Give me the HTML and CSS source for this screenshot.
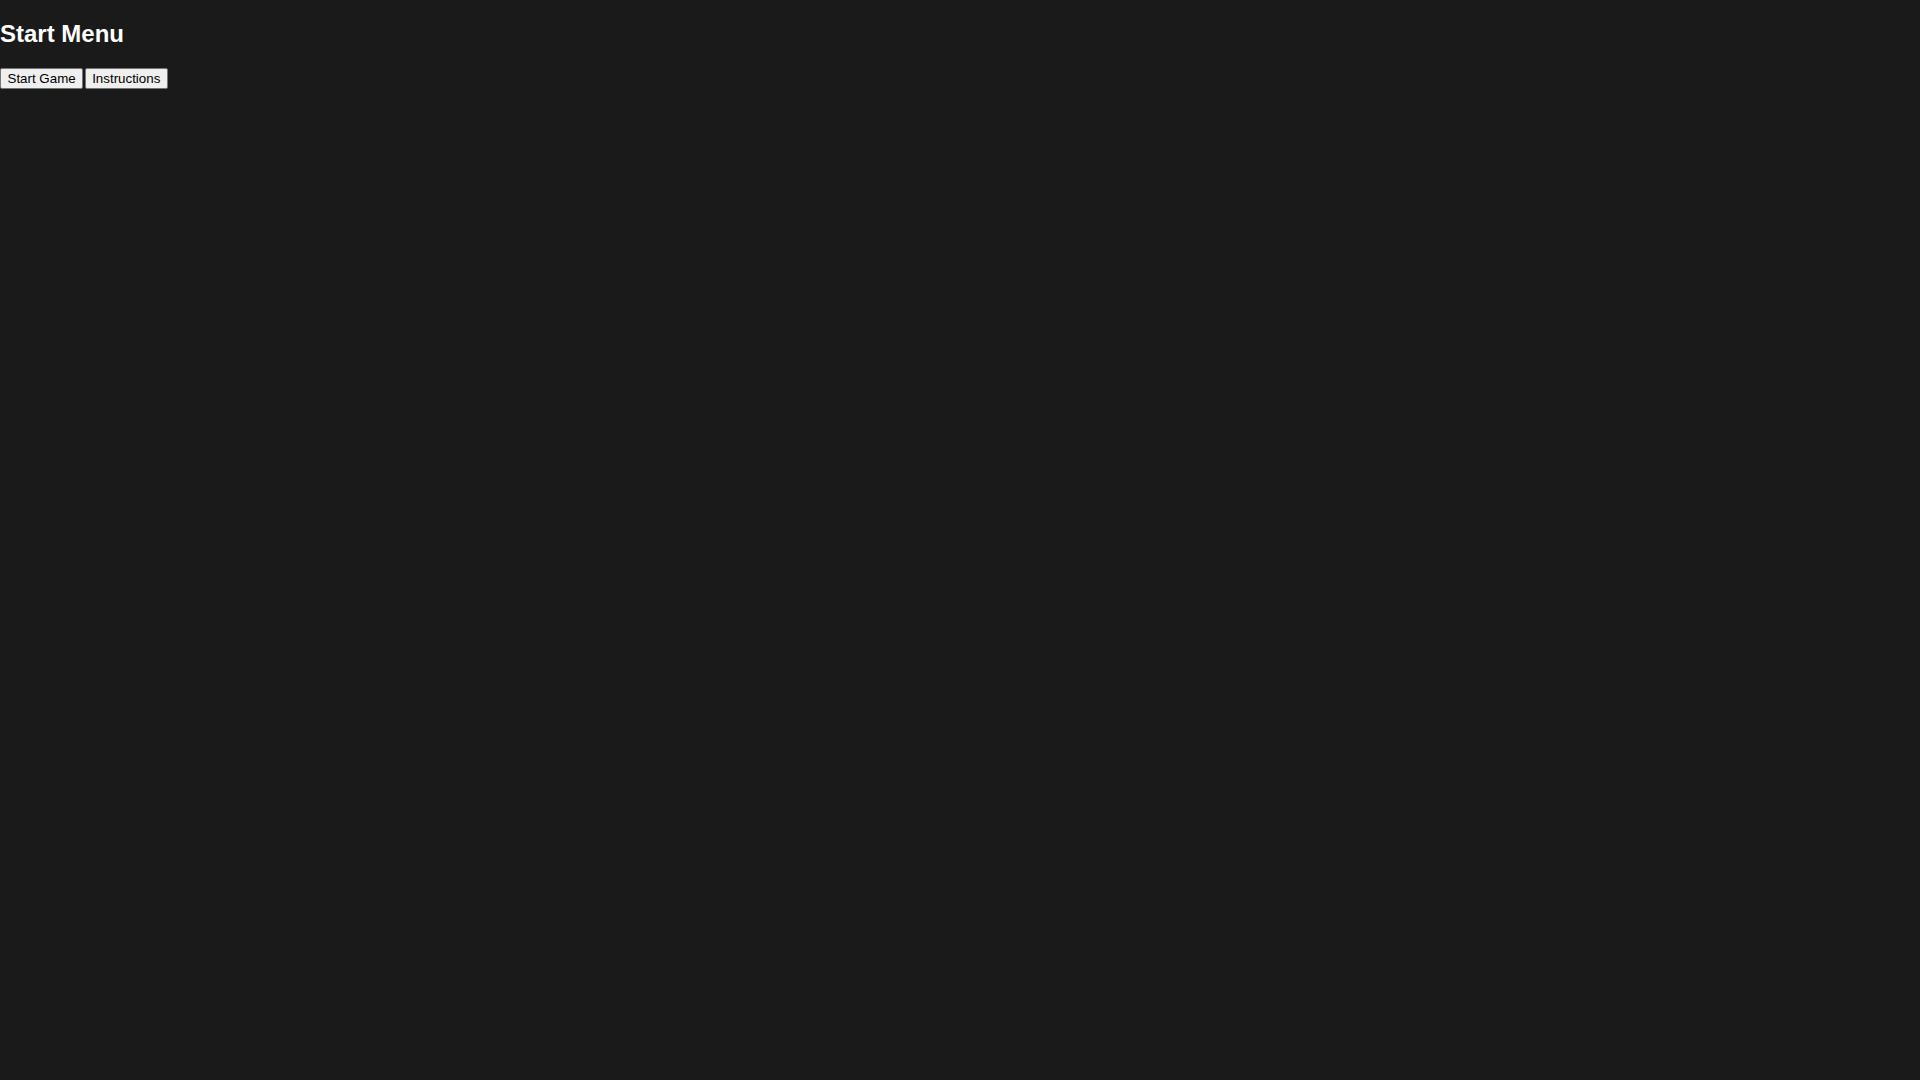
FILE: index.html
```html
<!DOCTYPE html>
<html class="root">
<head>
<meta charset="utf-8">
<link rel="stylesheet" href="styles.css">
</head>
<body class="page">
<h2 class="title">Start Menu</h2>
<div class="menu"><button class="btn">Start Game</button><button class="btn">Instructions</button></div>
</body>
</html>
```
FILE: styles.css
```css
.root {
  background: #1a1a1a;
  overflow: scroll;
}
.page {
  margin: 0;
  width: 100vw;
  height: 100vh;
  background: #1a1a1a;
  color: #ffffff;
  font-family: "Liberation Sans", Arial, sans-serif;
}
.title {
  font-size: 24px;
  font-weight: bold;
  margin: 19.92px 0;
}
.menu {
  display: flex;
  gap: 1.5px;
}
.btn {
  font-family: "Liberation Sans", Arial, sans-serif;
  font-size: 13.333px;
  line-height: normal;
  padding: 2px 6.5px;
  margin: 0;
  border: 1px solid #767676;
  border-radius: 2px;
  background: #efefef;
  color: #000000;
}
```
